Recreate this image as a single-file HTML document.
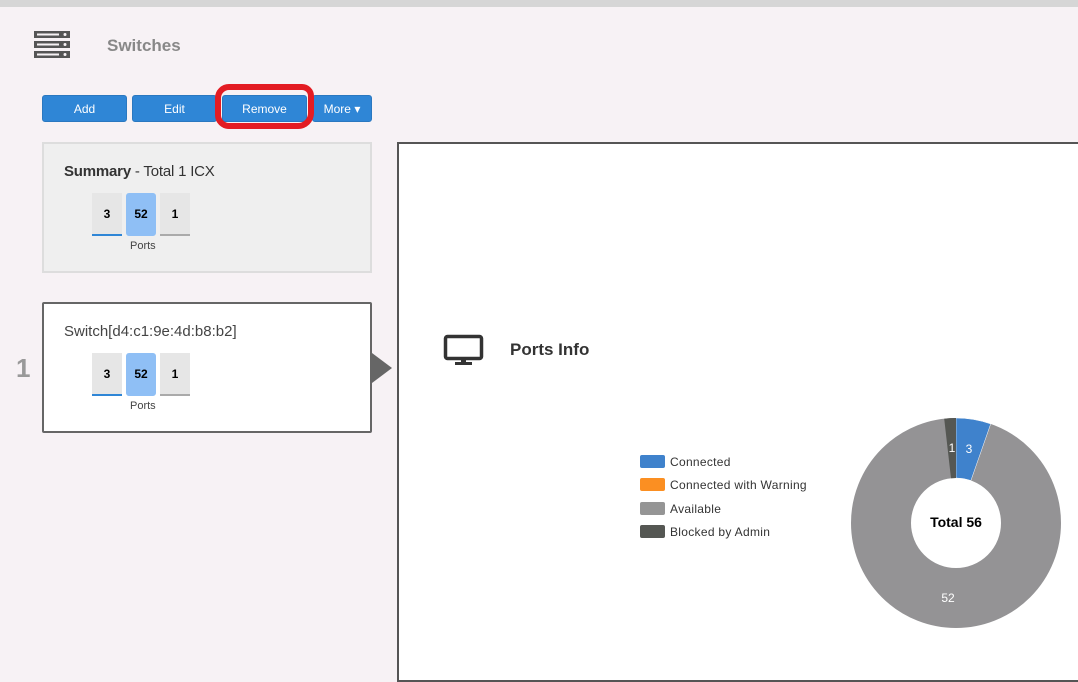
<!DOCTYPE html>
<html><head><meta charset="utf-8"><style>
*{margin:0;padding:0;box-sizing:border-box}
body{width:1078px;height:666px;overflow:hidden;background:#f7f2f5;font-family:"Liberation Sans",Arial,sans-serif;position:relative}
.top{position:absolute;left:0;top:0;width:1078px;height:7px;background:#d6d6d6}
.abs{position:absolute}
.btn{position:absolute;top:95px;height:27px;background:#2f86d6;border:1px solid #2a78c0;border-radius:3px;color:#fff;font-size:12px;text-align:center;line-height:26px}
.card{position:absolute;left:42px;width:330px}
.tile{position:absolute;top:0;width:30px;height:43px;background:#e6e6e6;font-size:12px;font-weight:bold;text-align:center;line-height:43px;color:#000}
</style></head><body>
<div class="top"></div>
<svg class="abs" style="left:34px;top:31px" width="37" height="28" viewBox="0 0 37 28">
<rect x="0" y="0" width="36" height="7" fill="#555"/><rect x="3" y="2.5" width="22" height="2" fill="#f7f2f5"/><circle cx="31" cy="3.5" r="1.5" fill="#f7f2f5"/>
<rect x="0" y="10" width="36" height="7" fill="#555"/><rect x="3" y="12.5" width="22" height="2" fill="#f7f2f5"/><circle cx="31" cy="13.5" r="1.5" fill="#f7f2f5"/>
<rect x="0" y="20" width="36" height="7" fill="#555"/><rect x="3" y="22.5" width="22" height="2" fill="#f7f2f5"/><circle cx="31" cy="23.5" r="1.5" fill="#f7f2f5"/>
</svg>
<div class="abs" style="left:107px;top:36px;font-size:17px;font-weight:bold;color:#888">Switches</div>
<div class="btn" style="left:42px;width:85px">Add</div>
<div class="btn" style="left:132px;width:85px">Edit</div>
<div class="btn" style="left:222px;width:85px">Remove</div>
<div class="btn" style="left:312px;width:60px">More &#9662;</div>
<div class="abs" style="left:215px;top:84px;width:99px;height:45px;border:6px solid #e31c23;border-radius:14px 12px 16px 14px"></div>

<div class="card" style="top:142px;height:131px;background:#efefef;border:2px solid #ddd">
<div class="abs" style="left:20px;top:19px;font-size:15px;color:#333;letter-spacing:-0.2px"><b>Summary</b> - Total 1 ICX</div>
<div class="abs" style="left:48px;top:49px">
<div class="tile" style="left:0;border-bottom:2px solid #2f86d6">3</div>
<div class="tile" style="left:34px;background:#8fbff5;border-radius:3px">52</div>
<div class="tile" style="left:68px;border-bottom:2px solid #aaa">1</div>
</div>
<div class="abs" style="left:86px;top:96px;font-size:11px;color:#444">Ports</div>
</div>

<div class="abs" style="left:16px;top:353px;font-size:26px;font-weight:bold;color:#999">1</div>
<div class="card" style="top:302px;height:131px;background:#fff;border:2px solid #666;border-radius:2px">
<div class="abs" style="left:20px;top:19px;font-size:15px;color:#444">Switch[d4:c1:9e:4d:b8:b2]</div>
<div class="abs" style="left:48px;top:49px">
<div class="tile" style="left:0;border-bottom:2px solid #2f86d6">3</div>
<div class="tile" style="left:34px;background:#8fbff5;border-radius:3px">52</div>
<div class="tile" style="left:68px;border-bottom:2px solid #aaa">1</div>
</div>
<div class="abs" style="left:86px;top:96px;font-size:11px;color:#444">Ports</div>
</div>
<div class="abs" style="left:372px;top:353px;width:0;height:0;border-top:15px solid transparent;border-bottom:15px solid transparent;border-left:20px solid #666"></div>

<div class="abs" style="left:397px;top:142px;width:700px;height:540px;background:#fff;border:2px solid #555"></div>
<svg class="abs" style="left:443px;top:334px" width="42" height="32" viewBox="0 0 42 32">
<rect x="2.5" y="2.5" width="36" height="22" rx="2" fill="none" stroke="#333" stroke-width="3.5"/>
<rect x="18" y="25" width="5" height="4" fill="#333"/><rect x="12" y="28" width="17" height="3" fill="#333"/>
</svg>
<div class="abs" style="left:510px;top:340px;font-size:17px;font-weight:bold;color:#333">Ports Info</div>

<div class="abs" style="left:640px;top:451px;font-size:12px;color:#333;line-height:23.3px;letter-spacing:0.3px">
<div><span style="display:inline-block;width:25px;height:13px;background:#3f82cc;border-radius:2px;vertical-align:-2px;margin-right:5px"></span>Connected</div>
<div><span style="display:inline-block;width:25px;height:13px;background:#fb8f22;border-radius:2px;vertical-align:-2px;margin-right:5px"></span>Connected with Warning</div>
<div><span style="display:inline-block;width:25px;height:13px;background:#959595;border-radius:2px;vertical-align:-2px;margin-right:5px"></span>Available</div>
<div><span style="display:inline-block;width:25px;height:13px;background:#555753;border-radius:2px;vertical-align:-2px;margin-right:5px"></span>Blocked by Admin</div>
</div>

<svg class="abs" style="left:0;top:0" width="1078" height="666">
<circle cx="956" cy="523" r="75" fill="none" stroke="#949395" stroke-width="60"/>
<path d="M956 418 A105 105 0 0 1 990.7 423.9 L970.9 480.5 A45 45 0 0 0 956 478 Z" fill="#3f82cc" stroke="#fff" stroke-width="0.5"/>
<path d="M944.2 418.7 A105 105 0 0 1 956 418 L956 478 A45 45 0 0 0 951 478.3 Z" fill="#555753"/>
<text x="969" y="453" font-size="12" fill="#fff" text-anchor="middle" font-family="Liberation Sans,sans-serif">3</text>
<text x="952" y="452" font-size="12" fill="#fff" text-anchor="middle" font-family="Liberation Sans,sans-serif">1</text>
<text x="948" y="602" font-size="12" fill="#fff" text-anchor="middle" font-family="Liberation Sans,sans-serif">52</text>
<text x="956" y="527" font-size="14" font-weight="bold" fill="#000" text-anchor="middle" font-family="Liberation Sans,sans-serif">Total 56</text>
</svg>
</body></html>
